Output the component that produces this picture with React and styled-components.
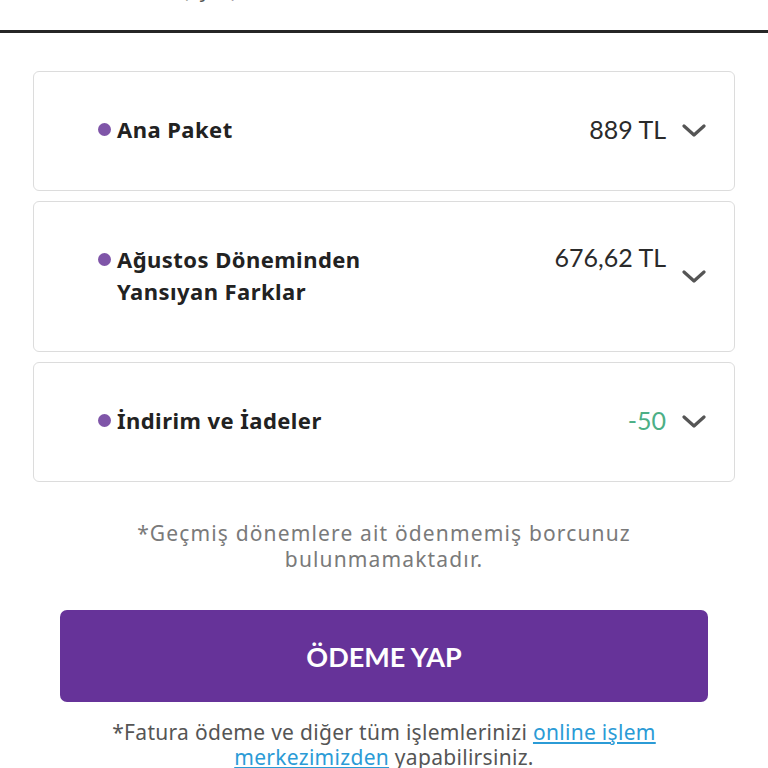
import styled, { createGlobalStyle } from "styled-components";

const GlobalStyle = createGlobalStyle`
  body {
    margin: 0;
    background: #fff;
    font-family: "Noto Sans", Lato, sans-serif;
  }
`;

const Page = styled.main`
  width: 768px;
  height: 768px;
  overflow: hidden;
`;

const TopBar = styled.header`
  height: 30px;
  overflow: hidden;
  border-bottom: 3px solid #262626;
`;

const TopText = styled.div`
  margin-top: -21px;
  padding-left: 40px;
  font-size: 20px;
  line-height: 22px;
  color: #555;
`;

const Content = styled.section`
  padding: 38px 33px 0;
  display: flex;
  flex-direction: column;
`;

const CardList = styled.div`
  display: flex;
  flex-direction: column;
  gap: 10px;
`;

const Card = styled.div`
  box-sizing: border-box;
  min-height: ${(p) => p.$height}px;
  border: 1px solid #dcdcdc;
  border-radius: 6px;
  padding: 0 28px 0 64px;
  display: flex;
  align-items: center;
`;

const Title = styled.div`
  flex: 1;
  display: flex;
  align-items: flex-start;
  gap: 6px;
  margin-bottom: 4px;
  font-size: 22px;
  font-weight: 700;
  letter-spacing: 0.45px;
  line-height: 32px;
  color: #222;
`;

const Dot = styled.span`
  flex: none;
  width: 13px;
  height: 13px;
  border-radius: 50%;
  background: #7f55a8;
  margin-top: 10px;
`;

const Amount = styled.div`
  align-self: ${(p) => (p.$top ? "flex-start" : "center")};
  margin-top: ${(p) => (p.$top ? "39px" : "0")};
  margin-bottom: ${(p) => (p.$top ? "0" : "5px")};
  font-family: Lato, "Noto Sans", sans-serif;
  font-size: 25px;
  line-height: 32px;
  color: ${(p) => (p.$green ? "#4caf86" : "#2a2a2a")};
  margin-right: 16px;
`;

const Chevron = () => (
  <svg width="24" height="14" viewBox="0 0 24 14">
    <path d="M2 2 L12 11 L22 2" fill="none" stroke="#555" strokeWidth="3.2" strokeLinecap="round" strokeLinejoin="round" />
  </svg>
);

const Note = styled.p`
  margin: 38px 0 0;
  text-align: center;
  font-size: 21px;
  letter-spacing: 1.15px;
  line-height: 26px;
  color: #7a7a7a;
  padding: 0 50px;
`;

const PayButton = styled.button`
  margin: 38px 27px 0;
  height: 92px;
  border: none;
  border-radius: 7px;
  background: #663399;
  color: #fff;
  font-family: Lato, "Noto Sans", sans-serif;
  font-size: 27px;
  font-weight: 700;
`;

const Footer = styled.p`
  margin: 18px 0 0;
  text-align: center;
  font-size: 21px;
  letter-spacing: 0.3px;
  line-height: 25px;
  color: #555;
  padding: 0 40px;
`;

const Link = styled.a`
  color: #2b9bd6;
  text-decoration: underline;
`;

export default function App() {
  return (
    <Page>
      <GlobalStyle />
      <TopBar>
        <TopText>Fatura özetiniz (aylık)</TopText>
      </TopBar>
      <Content>
        <CardList>
          <Card $height={120}>
            <Title>
              <Dot />
              <span>Ana Paket</span>
            </Title>
            <Amount>889 TL</Amount>
            <Chevron />
          </Card>
          <Card $height={151}>
            <Title>
              <Dot />
              <span>
                Ağustos Döneminden
                <br />
                Yansıyan Farklar
              </span>
            </Title>
            <Amount $top>676,62 TL</Amount>
            <Chevron />
          </Card>
          <Card $height={120}>
            <Title>
              <Dot />
              <span>İndirim ve İadeler</span>
            </Title>
            <Amount $green>-50</Amount>
            <Chevron />
          </Card>
        </CardList>
        <Note>
          *Geçmiş dönemlere ait ödenmemiş borcunuz
          <br />
          bulunmamaktadır.
        </Note>
        <PayButton>ÖDEME YAP</PayButton>
        <Footer>
          *Fatura ödeme ve diğer tüm işlemlerinizi <Link href="#">online işlem</Link>
          <br />
          <Link href="#">merkezimizden</Link> yapabilirsiniz.
        </Footer>
      </Content>
    </Page>
  );
}
